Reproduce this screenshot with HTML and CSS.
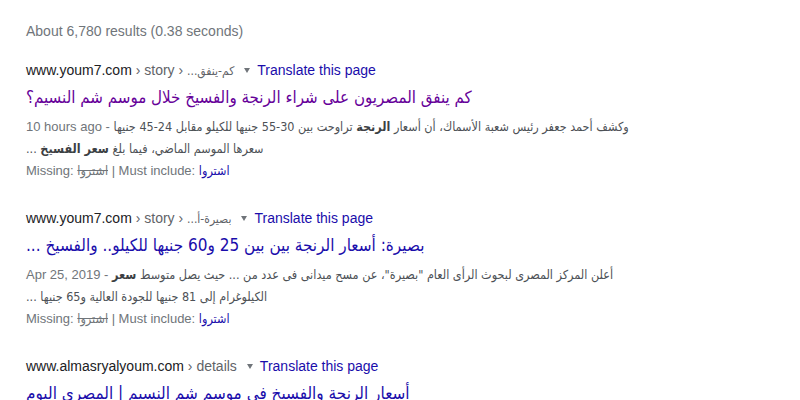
FILE: index.html
```html
<!DOCTYPE html>
<html lang="en">
<head>
<meta charset="utf-8">
<title>Search results</title>
<link rel="stylesheet" href="styles.css">
</head>
<body>
<div class="page">
  <div class="stats">About 6,780 results (0.38 seconds)</div>

  <div class="result">
    <div class="cite"><span class="domain">www.youm7.com</span><span class="path"> › story › <span class="crumb ar" dir="rtl">كم-ينفق...</span></span><span class="arrow"></span><a class="translate">Translate this page</a></div>
    <div class="title-row"><a class="title visited ar" dir="rtl">كم ينفق المصريون على شراء الرنجة والفسيخ خلال موسم شم النسيم؟</a></div>
    <div class="snippet">
      <div class="line"><span class="date">10 hours ago - </span><span class="ar" dir="rtl">وكشف أحمد جعفر رئيس شعبة الأسماك، أن أسعار <b>الرنجة</b> تراوحت بين 30-55 جنيها للكيلو مقابل 24-45 جنيها</span></div>
      <div class="line"><span class="ar" dir="rtl">سعرها الموسم الماضي، فيما بلغ <b>سعر الفسيخ</b> ...</span></div>
    </div>
    <div class="missing">Missing: <s class="ar">اشتروا</s> | Must include: <a class="must ar">اشتروا</a></div>
  </div>

  <div class="result">
    <div class="cite"><span class="domain">www.youm7.com</span><span class="path"> › story › <span class="crumb ar" dir="rtl">بصيرة-أ...</span></span><span class="arrow"></span><a class="translate">Translate this page</a></div>
    <div class="title-row"><a class="title ar" dir="rtl">بصيرة: أسعار الرنجة بين بين 25 و60 جنيها للكيلو.. والفسيخ ...</a></div>
    <div class="snippet">
      <div class="line"><span class="date">Apr 25, 2019 - </span><span class="ar" dir="rtl">أعلن المركز المصرى لبحوث الرأى العام "بصيرة"، عن مسح ميدانى فى عدد من ... حيث يصل متوسط <b>سعر</b></span></div>
      <div class="line"><span class="ar" dir="rtl">الكيلوغرام إلى 81 جنيها للجودة العالية و65 جنيها ...</span></div>
    </div>
    <div class="missing">Missing: <s class="ar">اشتروا</s> | Must include: <a class="must ar">اشتروا</a></div>
  </div>

  <div class="result">
    <div class="cite"><span class="domain">www.almasryalyoum.com</span><span class="path"> › details</span><span class="arrow"></span><a class="translate">Translate this page</a></div>
    <div class="title-row"><a class="title hover ar" dir="rtl">أسعار الرنجة والفسيخ في موسم شم النسيم | المصري اليوم</a></div>
  </div>
</div>
</body>
</html>
```

FILE: styles.css
```css
html, body {
  margin: 0;
  padding: 0;
  background: #ffffff;
}

body {
  font-family: "Liberation Sans", Arial, "DejaVu Sans", sans-serif;
  color: #4d5156;
}

.page {
  padding: 20px 0 0 26px;
}

.stats {
  font-size: 14px;
  line-height: 22px;
  color: #70757a;
  margin-bottom: 17px;
}

.result {
  margin-bottom: 25px;
}

.cite {
  display: flex;
  align-items: center;
  font-size: 14px;
  line-height: 22px;
  height: 22px;
  white-space: nowrap;
}

.domain {
  color: #202124;
}

.path {
  color: #5f6368;
  white-space: pre;
}

.crumb {
  font-size: 12px;
}

.arrow {
  width: 0;
  height: 0;
  border-left: 3.5px solid transparent;
  border-right: 3.5px solid transparent;
  border-top: 5px solid #70757a;
  margin: 0 7px 0 10px;
}

.translate {
  color: #1a0dab;
}

.title-row {
  margin-top: 3px;
  height: 26px;
  line-height: 26px;
}

.title {
  display: inline-block;
  font-size: 17px;
  color: #1a0dab;
  white-space: nowrap;
}

.title.visited {
  color: #660099;
  font-size: 16.8px;
}

.title.hover {
  text-decoration: underline;
}

.snippet {
  margin-top: 6px;
  font-size: 13px;
  line-height: 22px;
}

.snippet .ar {
  font-size: 12.5px;
}

.line {
  white-space: nowrap;
}

.date {
  color: #70757a;
}

.snippet b {
  font-weight: bold;
  color: #3c4043;
}

.missing {
  font-size: 13px;
  line-height: 22px;
  color: #70757a;
}

.missing .ar {
  font-size: 12.5px;
}

.missing s {
  color: #70757a;
}

.must {
  color: #1a0dab;
}

.ar {
  font-family: "DejaVu Sans Condensed", "DejaVu Sans", sans-serif;
}
```
